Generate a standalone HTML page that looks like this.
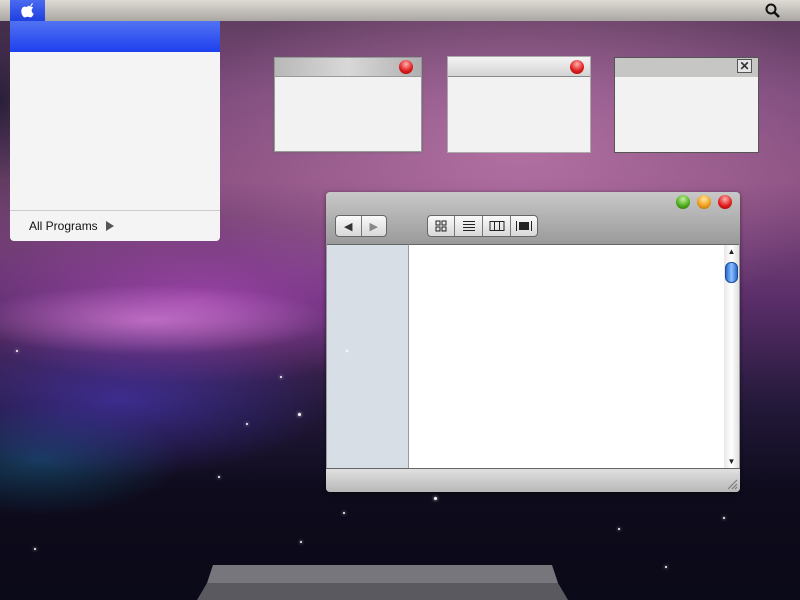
<!DOCTYPE html>
<html><head><meta charset="utf-8"><style>
*{margin:0;padding:0;box-sizing:border-box}
body{width:800px;height:600px;overflow:hidden;position:relative;font-family:"Liberation Sans",sans-serif;
background:
radial-gradient(ellipse 260px 50px at 150px 320px,rgba(240,150,240,.55),transparent 70%),
radial-gradient(ellipse 380px 120px at 200px 300px,rgba(200,80,210,.55),transparent 70%),
radial-gradient(ellipse 500px 260px at 520px 150px,rgba(200,130,180,.65),transparent 70%),
radial-gradient(ellipse 300px 110px at 120px 400px,rgba(80,60,210,.55),transparent 70%),
radial-gradient(ellipse 200px 80px at 40px 460px,rgba(20,110,150,.45),transparent 70%),
radial-gradient(ellipse 120px 200px at 0px 100px,rgba(20,20,40,.8),transparent 70%),
linear-gradient(180deg,#5a3a5a 0%,#7a4a7a 15%,#8a5080 30%,#5a2e6a 50%,#221838 68%,#0e0b1c 82%,#0b0a18 100%);}
.abs{position:absolute}
.menubar{left:0;top:0;width:800px;height:21px;background:linear-gradient(#dedad4,#aaa7a2);}
.apple{left:10px;top:0;width:35px;height:21px;background:linear-gradient(#4a6af0,#1f3fe0);}
.win{background:#f2f2f2;border:1px solid #888;}
.star{position:absolute;width:3px;height:3px;border-radius:50%;background:#fff;box-shadow:0 0 3px #fff}
.ball{position:absolute;width:14px;height:14px;border-radius:50%;}
.red{background:radial-gradient(circle at 50% 30%,#ffb0b0,#e02020 55%,#900 100%)}
.yel{background:radial-gradient(circle at 50% 30%,#ffe9a0,#f0a020 55%,#b06000 100%)}
.grn{background:radial-gradient(circle at 50% 30%,#c8f0a0,#50b020 55%,#206000 100%)}
.btn{position:absolute;height:22px;border:1px solid #666;border-radius:4px;background:linear-gradient(#fafafa,#d8d8d8);display:flex}
.btn div{border-right:1px solid #777;display:flex;align-items:center;justify-content:center;font-size:11px;color:#333}
.btn div:last-child{border-right:none}
</style></head><body>
<div class="abs menubar"></div>
<div class="abs apple"><svg width="35" height="21"><path d="M17.5 6c1-.2 2-.1 2.8.5.3-1.8 1.2-3 2.6-3.5-.2 1.6-1 2.8-2.5 3.4 1 0 2 .5 2.8 1.2-1.2.8-1.6 2-1.5 3.2.1 1.3.8 2.4 2 3-.6 1.8-1.8 3.6-3.2 3.6-1.2 0-1.6-.6-2.8-.6s-1.7.6-2.8.6c-1.6 0-3.6-3-3.6-6.2 0-3 1.8-4.6 3.6-4.6 1 0 1.6.4 2.6.4z" fill="#fff"/></svg></div>
<svg class="abs" style="left:764px;top:2px" width="18" height="18"><circle cx="7" cy="7" r="4.5" fill="none" stroke="#111" stroke-width="2"/><line x1="10.5" y1="10.5" x2="15" y2="15" stroke="#111" stroke-width="2.5"/></svg>

<div class="abs" style="left:10px;top:21px;width:210px;height:220px;background:#f4f4f4;border-radius:0 0 4px 4px">
<div style="height:31px;background:linear-gradient(#5272f2,#1e40ee)"></div>
<div style="position:absolute;top:189px;left:0;right:0;border-top:1px solid #ccc"></div>
<div style="position:absolute;left:19px;top:198px;font-size:12px;color:#111">All Programs</div>
<div style="position:absolute;left:96px;top:200px;width:0;height:0;border-left:8px solid #555;border-top:5px solid transparent;border-bottom:5px solid transparent"></div>
</div>

<div class="abs win" style="left:274px;top:57px;width:148px;height:95px;border-color:#999;box-shadow:0 0 2px #666">
<div style="height:19px;background:linear-gradient(90deg,#b8b8b8,#d8d8d8 50%,#b0b0b0);border-bottom:1px solid #999"></div>
<div class="ball red" style="left:124px;top:2px"></div></div>
<div class="abs win" style="left:447px;top:56px;width:144px;height:97px;border-color:#aaa">
<div style="height:20px;background:linear-gradient(#f4f4f4,#d4d4d4);border-bottom:1px solid #888"></div>
<div class="ball red" style="left:122px;top:3px"></div></div>
<div class="abs win" style="left:614px;top:57px;width:145px;height:96px;border-color:#555">
<div style="height:19px;background:#c6c6c4"></div>
<div style="position:absolute;left:122px;top:1px;width:15px;height:14px;border:1px solid #555;background:#e4e4e4;font-size:12px;line-height:12px;text-align:center;font-weight:bold;color:#333">✕</div></div>

<div class="abs" style="left:326px;top:192px;width:414px;height:300px;border-radius:4px;background:linear-gradient(#c8c8c8,#9a9a9a 52px);overflow:hidden;box-shadow:0 1px 4px rgba(0,0,0,.5)">
<div class="ball grn" style="left:350px;top:3px"></div>
<div class="ball yel" style="left:371px;top:3px"></div>
<div class="ball red" style="left:392px;top:3px"></div>
<div class="btn" style="left:9px;top:23px;width:52px"><div style="width:26px">◀</div><div style="width:25px;color:#888">▶</div></div>
<div class="btn" style="left:101px;top:23px;width:111px">
<div style="width:27px"><svg width="12" height="12"><rect x="1" y="1" width="4" height="4" fill="none" stroke="#222"/><rect x="7" y="1" width="4" height="4" fill="none" stroke="#222"/><rect x="1" y="7" width="4" height="4" fill="none" stroke="#222"/><rect x="7" y="7" width="4" height="4" fill="none" stroke="#222"/></svg></div>
<div style="width:28px"><svg width="14" height="12"><path d="M1 1.5h12M1 4.5h12M1 7.5h12M1 10.5h12" stroke="#222"/></svg></div>
<div style="width:28px"><svg width="16" height="12"><rect x="1" y="1.5" width="14" height="9" fill="none" stroke="#222"/><path d="M5.5 1.5v9M10.5 1.5v9" stroke="#222"/></svg></div>
<div style="width:26px"><svg width="18" height="12"><rect x="4" y="2" width="10" height="8" fill="#222"/><path d="M1.5 1v10M16.5 1v10" stroke="#222"/></svg></div>
</div>
<div style="position:absolute;left:1px;top:52px;width:81px;height:224px;background:#d7dee6;border-top:1px solid #666"></div>
<div style="position:absolute;left:82px;top:52px;width:316px;height:224px;background:#fff;border-top:1px solid #666;border-left:1px solid #999"></div>
<div style="position:absolute;left:398px;top:52px;width:15px;height:224px;background:linear-gradient(90deg,#e8e8e8,#fff,#e0e0e0);border-top:1px solid #666">
<div style="font-size:8px;text-align:center;color:#222;margin-top:2px">▲</div>
<div style="position:absolute;left:1px;top:17px;width:13px;height:21px;border-radius:6px;background:linear-gradient(90deg,#2a6ad0,#8cc0ff,#2a6ad0);border:1px solid #1a4a9a"></div>
<div style="position:absolute;bottom:2px;width:15px;font-size:8px;text-align:center;color:#222">▼</div></div>
<div style="position:absolute;left:0;top:276px;width:414px;height:24px;background:linear-gradient(#e0e0e0,#b8b8b8);border-top:1px solid #666"></div>
<svg style="position:absolute;left:400px;top:286px" width="12" height="12"><path d="M2 11L11 2M6 11L11 6M9 11L11 9" stroke="#777"/></svg>
</div>

<div class="star" style="left:298px;top:413px"></div>
<div class="star" style="left:280px;top:376px;width:2px;height:2px"></div>
<div class="star" style="left:346px;top:350px;width:2px;height:2px"></div>
<div class="star" style="left:434px;top:497px"></div>
<div class="star" style="left:343px;top:512px;width:2px;height:2px"></div>
<div class="star" style="left:300px;top:541px;width:2px;height:2px"></div>
<div class="star" style="left:723px;top:517px;width:2px;height:2px"></div>
<div class="star" style="left:665px;top:566px;width:2px;height:2px"></div>
<div class="star" style="left:618px;top:528px;width:2px;height:2px"></div>
<div class="star" style="left:218px;top:476px;width:2px;height:2px"></div>
<div class="star" style="left:16px;top:350px;width:2px;height:2px"></div>
<div class="star" style="left:34px;top:548px;width:2px;height:2px"></div>
<div class="star" style="left:246px;top:423px;width:2px;height:2px"></div>
<svg class="abs" style="left:0;top:565px" width="800" height="35"><polygon points="213,0 552,0 558,18 207,18" fill="#77767c"/><polygon points="207,18 558,18 568,35 197,35" fill="#5a5960"/></svg>
</body></html>
